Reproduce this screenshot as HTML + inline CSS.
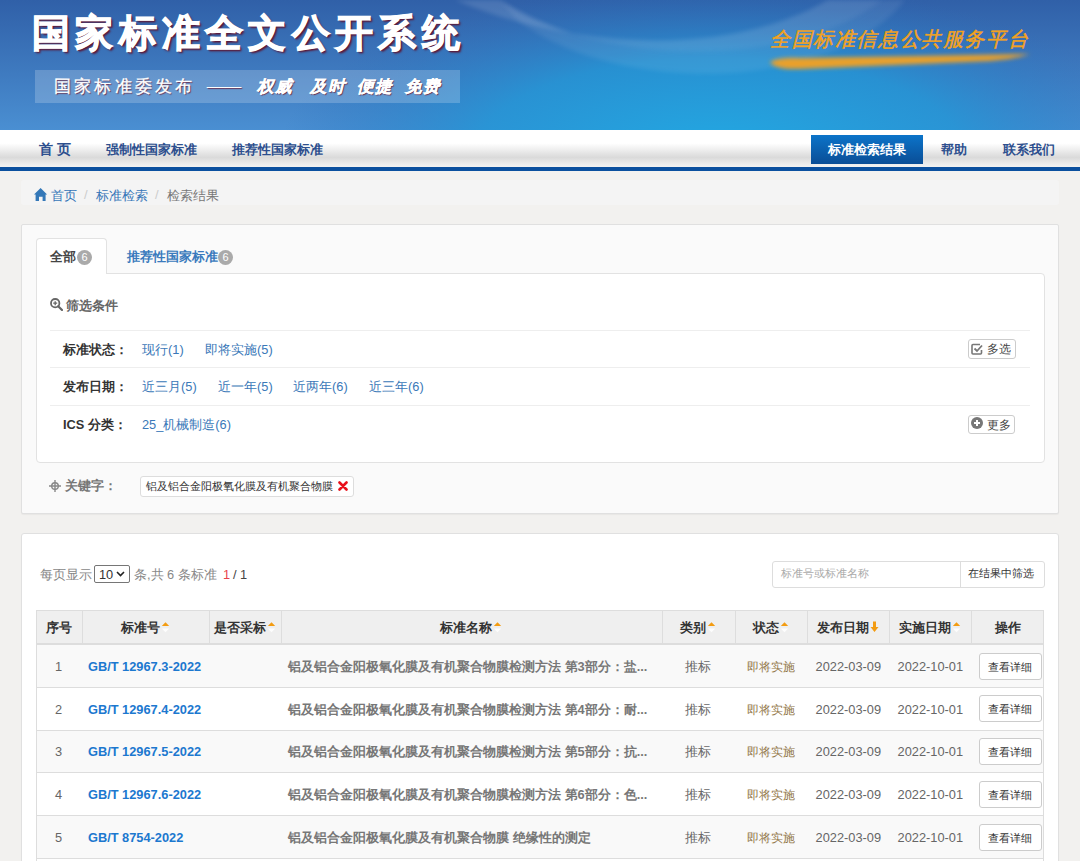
<!DOCTYPE html>
<html><head><meta charset="utf-8">
<style>
*{box-sizing:border-box;margin:0;padding:0}
html,body{width:1080px;height:861px;overflow:hidden}
body{font-family:"Liberation Sans",sans-serif;background:#f2f1ef;position:relative;font-size:13px;color:#555}
.abs{position:absolute}
#title{left:32px;top:11px;font-size:38px;line-height:44px;font-weight:bold;color:#fff;letter-spacing:5.3px;transform:none;transform-origin:0 0;-webkit-text-stroke:1.1px #fff;
 text-shadow:1px 1px 0 #5a1a3a,2px 2px 2px #5a1a3a}
#subbox{left:35px;top:70px;width:425px;height:33px;background:rgba(255,255,255,.2)}
.sub{top:76.5px;font-family:"Liberation Serif",serif;font-size:17px;line-height:20px;color:#fff;-webkit-text-stroke:0.3px #fff;text-shadow:1px 1px 1px #6a3050;white-space:nowrap}
.scr{font-weight:bold;font-style:italic;letter-spacing:1px;font-size:16.5px}
#slogan{left:770px;top:26px;font-size:20px;color:#f3a21e;font-style:italic;font-weight:normal;-webkit-text-stroke:0.5px #f3a21e;letter-spacing:1.6px;white-space:nowrap}
#nav{left:0;top:130px;width:1080px;height:37px;
 background:linear-gradient(180deg,#ffffff 0%,#ffffff 36%,#dadada 74%,#f0f0f0 97%)}
#navline{left:0;top:167px;width:1080px;height:3.5px;background:#0a4f9e}
.nv{position:absolute;top:141px;font-size:13px;font-weight:bold;color:#2d4f8e;white-space:nowrap}
#navact{left:810.5px;top:134.7px;width:112.5px;height:29px;background:linear-gradient(180deg,#0c74c9,#0a4d96)}
#crumb{left:21px;top:179.5px;width:1038px;height:25.5px;background:#f4f4f4;border-radius:3px}
.panel{position:absolute;left:21px;width:1038px;background:#fafafa;border:1px solid #e0e0e0;border-radius:2px;box-shadow:0 1px 1px rgba(0,0,0,.04)}
.tx{font-size:12.8px;white-space:nowrap;line-height:16px}
.badge{width:15px;height:15px;border-radius:7.5px;background:#aaa;color:#fff;font-size:11px;line-height:15px;text-align:center}
.hl{left:50px;width:980px;height:1px;background:#eee}
.lb{color:#333;font-weight:bold}
.lk{color:#3a78b8}
.sbtn{background:#fff;border:1px solid #ccc;border-radius:3px}
.th{font-size:12.8px;line-height:16px;font-weight:bold;color:#333;text-align:center;white-space:nowrap}
.td{font-size:12.8px;line-height:16px;white-space:nowrap}
</style></head>
<body>
<svg id="banner" class="abs" width="1080" height="130" viewBox="0 0 1080 130">
<defs>
<linearGradient id="bgv" x1="0" y1="0" x2="0" y2="1"><stop offset="0" stop-color="#3060a8"/><stop offset="1" stop-color="#4a8fd2"/></linearGradient>
<radialGradient id="cy" cx="720" cy="150" r="440" gradientUnits="userSpaceOnUse" gradientTransform="translate(720 150) scale(1 0.38) translate(-720 -150)"><stop offset="0" stop-color="#22a8e2" stop-opacity="1"/><stop offset="0.55" stop-color="#2296d6" stop-opacity="0.8"/><stop offset="1" stop-color="#2a70bd" stop-opacity="0"/></radialGradient>
<filter id="bl" x="-20%" y="-50%" width="140%" height="200%"><feGaussianBlur stdDeviation="2"/></filter>
<filter id="bl4"><feGaussianBlur stdDeviation="4"/></filter>
</defs>
<rect width="1080" height="130" fill="url(#bgv)"/>
<rect width="1080" height="130" fill="url(#cy)"/>
<path d="M455 0 C560 45 720 62 828 0 L882 0 C800 66 610 72 500 0 Z" fill="#fff" opacity="0.12" filter="url(#bl)"/>
<path d="M500 0 C610 72 800 66 882 0 L905 0 C830 95 610 95 515 18 Z" fill="#fff" opacity="0.07" filter="url(#bl)"/>
<path d="M770 62 Q780 57 800 58 L1030 54 Q1010 60 990 61 L800 69 Q775 70 770 62 Z" fill="#e9a02a" filter="url(#bl)"/>
</svg>
<div id="title" class="abs">国家标准全文公开系统</div>
<div id="subbox" class="abs"></div>
<div class="abs sub" style="left:54px;letter-spacing:3.2px">国家标准委发布</div>
<div class="abs sub" style="left:207px;top:75.5px">——</div>
<div class="abs sub scr" style="left:257px">权威</div>
<div class="abs sub scr" style="left:310px">及时</div>
<div class="abs sub scr" style="left:357px">便捷</div>
<div class="abs sub scr" style="left:405px">免费</div>
<div id="slogan" class="abs">全国标准信息公共服务平台</div>

<div id="nav" class="abs"></div>
<div id="navline" class="abs"></div>
<div class="nv" style="left:39px;top:141px;font-size:14px">首&nbsp;页</div>
<div class="nv" style="left:106px">强制性国家标准</div>
<div class="nv" style="left:232px">推荐性国家标准</div>
<div id="navact" class="abs"></div>
<div class="nv" style="left:828px;color:#fff">标准检索结果</div>
<div class="nv" style="left:941px">帮助</div>
<div class="nv" style="left:1003px">联系我们</div>

<div id="crumb" class="abs"></div>
<div id="crumbtxt" class="abs" style="left:34px;top:187px;font-size:13px;white-space:nowrap">
<svg width="14" height="14" viewBox="0 0 14 14" style="position:absolute;left:0.4px;top:1.2px"><path d="M6.6 0 L13.1 6.5 L11.6 6.5 L11.6 13 L8.6 13 L8.6 8.8 L5 8.8 L5 13 L1.6 13 L1.6 6.5 L0 6.5 Z" fill="#3478b8"/></svg>
<span style="position:absolute;left:17px;top:0;color:#3676b8">首页</span>
<span style="position:absolute;left:50px;top:0;color:#ccc">/</span>
<span style="position:absolute;left:62px;top:0;color:#3676b8">标准检索</span>
<span style="position:absolute;left:121px;top:0;color:#ccc">/</span>
<span style="position:absolute;left:133px;top:0;color:#777">检索结果</span>
</div>


<div class="panel" style="top:223.5px;height:290px"></div>
<!-- tabs -->
<div class="abs" style="left:36px;top:273px;width:1008.5px;height:190px;background:#fff;border:1px solid #e2e2e2;border-radius:0 4px 4px 4px"></div>
<div class="abs" style="left:36px;top:238px;width:71px;height:36px;background:#fff;border:1px solid #e2e2e2;border-bottom:none;border-radius:4px 4px 0 0"></div>
<div class="abs tx" style="left:50px;top:249px;color:#444;font-weight:bold">全部</div>
<div class="abs badge" style="left:77px;top:250px">6</div>
<div class="abs tx" style="left:127px;top:249px;color:#3a7abd;font-weight:bold">推荐性国家标准</div>
<div class="abs badge" style="left:218px;top:250px">6</div>
<svg class="abs" style="left:50px;top:298px" width="13" height="13" viewBox="0 0 13 13"><circle cx="5.2" cy="5.2" r="4.2" fill="none" stroke="#666" stroke-width="1.8"/><path d="M8.2 8.2 L12 12" stroke="#666" stroke-width="2.2" stroke-linecap="round"/><path d="M3.2 5.2 H7.2 M5.2 3.2 V7.2" stroke="#666" stroke-width="1.3"/></svg>
<div class="abs tx" style="left:66px;top:298px;color:#666;font-weight:bold">筛选条件</div>
<div class="abs hl" style="top:330px"></div>
<div class="abs hl" style="top:367px"></div>
<div class="abs hl" style="top:405px"></div>
<div class="abs tx lb" style="left:63px;top:342px">标准状态：</div>
<div class="abs tx lk" style="left:142px;top:342px">现行(1)</div>
<div class="abs tx lk" style="left:205px;top:342px">即将实施(5)</div>
<div class="abs tx lb" style="left:63px;top:379px">发布日期：</div>
<div class="abs tx lk" style="left:142px;top:379px">近三月(5)</div>
<div class="abs tx lk" style="left:218px;top:379px">近一年(5)</div>
<div class="abs tx lk" style="left:293px;top:379px">近两年(6)</div>
<div class="abs tx lk" style="left:369px;top:379px">近三年(6)</div>
<div class="abs tx lb" style="left:63px;top:417px">ICS 分类：</div>
<div class="abs tx lk" style="left:142px;top:417px">25_机械制造(6)</div>
<div class="abs sbtn" style="left:967.5px;top:339px;width:48px;height:20px"></div>
<svg class="abs" style="left:971px;top:343px" width="12" height="12" viewBox="0 0 12 12"><path d="M9 1.5 H2 Q1 1.5 1 2.5 V10 Q1 11 2 11 H9.5 Q10.5 11 10.5 10 V7" fill="none" stroke="#777" stroke-width="1.6"/><path d="M3.5 5.5 L6 8 L11 2.5" fill="none" stroke="#777" stroke-width="1.8"/></svg>
<div class="abs tx" style="left:987px;top:341px;color:#444;font-size:12.2px">多选</div>
<div class="abs sbtn" style="left:967.5px;top:414.5px;width:47.5px;height:19.5px"></div>
<svg class="abs" style="left:970.5px;top:417px" width="12" height="12" viewBox="0 0 12 12"><circle cx="6" cy="6" r="6" fill="#777"/><path d="M6 3 V9 M3 6 H9" stroke="#fff" stroke-width="2"/></svg>
<div class="abs tx" style="left:987px;top:416.5px;color:#444;font-size:12.2px">更多</div>
<svg class="abs" style="left:49px;top:479.5px" width="12" height="12" viewBox="0 0 12 12"><circle cx="6" cy="6" r="3.3" fill="none" stroke="#888" stroke-width="1.4"/><path d="M6 0 V12 M0 6 H12" stroke="#888" stroke-width="1.4"/></svg>
<div class="abs tx" style="left:65px;top:478px;color:#777;font-weight:bold">关键字：</div>
<div class="abs" style="left:140px;top:476px;width:214px;height:21px;background:#fff;border:1px solid #ddd;border-radius:3px"></div>
<div class="abs" style="left:146px;top:479px;font-size:10.9px;line-height:14px;color:#333;white-space:nowrap">铝及铝合金阳极氧化膜及有机聚合物膜</div>
<svg class="abs" style="left:338px;top:481px" width="10" height="10" viewBox="0 0 10 10"><path d="M1.5 1.5 L8.5 8.5 M8.5 1.5 L1.5 8.5" stroke="#e8101a" stroke-width="2.6" stroke-linecap="round"/></svg>

<div class="panel" style="top:532.5px;height:340px;background:#fff;border-radius:3px"></div>
<div class="abs" style="left:40px;top:567px;font-size:12.8px;line-height:16px;color:#888;white-space:nowrap">每页显示</div>
<div class="abs" style="left:94px;top:565px;width:36px;height:18px;border:1px solid #767676;border-radius:2px;background:#fff"></div>
<div class="abs" style="left:99px;top:567px;font-size:12.8px;line-height:16px;color:#333">10</div>
<svg class="abs" style="left:116px;top:571px" width="9" height="6" viewBox="0 0 9 6"><path d="M1 1 L4.5 4.5 L8 1" fill="none" stroke="#222" stroke-width="1.6"/></svg>
<div class="abs" style="left:134px;top:567px;font-size:12.8px;line-height:16px;color:#888;white-space:nowrap">条,共 6 条标准</div>
<div class="abs" style="left:223px;top:567px;font-size:12.8px;line-height:16px;color:#e8424a">1</div>
<div class="abs" style="left:233px;top:567px;font-size:12.8px;line-height:16px;color:#444;white-space:nowrap">/ 1</div>
<div class="abs" style="left:771.5px;top:560.5px;width:273px;height:27px;border:1px solid #ddd;border-radius:3px;background:#fff"></div>
<div class="abs" style="left:959.5px;top:560.5px;width:1px;height:27px;background:#ddd"></div>
<div class="abs" style="left:780.5px;top:566px;font-size:10.9px;line-height:14px;color:#aaa;white-space:nowrap">标准号或标准名称</div>
<div class="abs" style="left:968px;top:566px;font-size:10.9px;line-height:14px;color:#333;white-space:nowrap">在结果中筛选</div>

<div class="abs" style="left:35.8px;top:610.2px;width:1008.2px;height:34.5px;background:#efefef;border:1px solid #ddd;border-bottom:2px solid #ddd"></div>
<div class="abs" style="left:35.8px;top:644.70px;width:1008.2px;height:42.72px;background:#f9f9f9;border-left:1px solid #ddd;border-right:1px solid #ddd"></div><div class="abs" style="left:35.8px;top:686.92px;width:1008.2px;height:1px;background:#ddd;z-index:1"></div>
<div class="abs" style="left:35.8px;top:687.42px;width:1008.2px;height:42.72px;background:#fff;border-left:1px solid #ddd;border-right:1px solid #ddd"></div><div class="abs" style="left:35.8px;top:729.64px;width:1008.2px;height:1px;background:#ddd;z-index:1"></div>
<div class="abs" style="left:35.8px;top:730.14px;width:1008.2px;height:42.72px;background:#f9f9f9;border-left:1px solid #ddd;border-right:1px solid #ddd"></div><div class="abs" style="left:35.8px;top:772.36px;width:1008.2px;height:1px;background:#ddd;z-index:1"></div>
<div class="abs" style="left:35.8px;top:772.86px;width:1008.2px;height:42.72px;background:#fff;border-left:1px solid #ddd;border-right:1px solid #ddd"></div><div class="abs" style="left:35.8px;top:815.08px;width:1008.2px;height:1px;background:#ddd;z-index:1"></div>
<div class="abs" style="left:35.8px;top:815.58px;width:1008.2px;height:42.72px;background:#f9f9f9;border-left:1px solid #ddd;border-right:1px solid #ddd"></div><div class="abs" style="left:35.8px;top:857.80px;width:1008.2px;height:1px;background:#ddd;z-index:1"></div>
<div class="abs" style="left:81.5px;top:611.2px;width:1px;height:31.5px;background:#ddd"></div>
<div class="abs" style="left:208.5px;top:611.2px;width:1px;height:31.5px;background:#ddd"></div>
<div class="abs" style="left:281px;top:611.2px;width:1px;height:31.5px;background:#ddd"></div>
<div class="abs" style="left:661.5px;top:611.2px;width:1px;height:31.5px;background:#ddd"></div>
<div class="abs" style="left:734.8px;top:611.2px;width:1px;height:31.5px;background:#ddd"></div>
<div class="abs" style="left:807.3px;top:611.2px;width:1px;height:31.5px;background:#ddd"></div>
<div class="abs" style="left:889.3px;top:611.2px;width:1px;height:31.5px;background:#ddd"></div>
<div class="abs" style="left:971.3px;top:611.2px;width:1px;height:31.5px;background:#ddd"></div>
<div class="abs th" style="left:35.8px;top:619.7px;width:45.7px">序号</div>
<div class="abs th" style="left:81.5px;top:619.7px;width:127.0px">标准号<svg width="9" height="12" viewBox="0 0 9 12" style="vertical-align:-1px;margin-left:1px"><path d="M0.8 5 L4.5 1.2 L8.2 5 Z" fill="#f39c12"/><path d="M0.8 7.5 L4.5 11.2 L8.2 7.5 Z" fill="#fdfdfd"/></svg></div>
<div class="abs th" style="left:208.5px;top:619.7px;width:72.5px">是否采标<svg width="9" height="12" viewBox="0 0 9 12" style="vertical-align:-1px;margin-left:1px"><path d="M0.8 5 L4.5 1.2 L8.2 5 Z" fill="#f39c12"/><path d="M0.8 7.5 L4.5 11.2 L8.2 7.5 Z" fill="#fdfdfd"/></svg></div>
<div class="abs th" style="left:281px;top:619.7px;width:380.5px">标准名称<svg width="9" height="12" viewBox="0 0 9 12" style="vertical-align:-1px;margin-left:1px"><path d="M0.8 5 L4.5 1.2 L8.2 5 Z" fill="#f39c12"/><path d="M0.8 7.5 L4.5 11.2 L8.2 7.5 Z" fill="#fdfdfd"/></svg></div>
<div class="abs th" style="left:661.5px;top:619.7px;width:73.29999999999995px">类别<svg width="9" height="12" viewBox="0 0 9 12" style="vertical-align:-1px;margin-left:1px"><path d="M0.8 5 L4.5 1.2 L8.2 5 Z" fill="#f39c12"/><path d="M0.8 7.5 L4.5 11.2 L8.2 7.5 Z" fill="#fdfdfd"/></svg></div>
<div class="abs th" style="left:734.8px;top:619.7px;width:72.5px">状态<svg width="9" height="12" viewBox="0 0 9 12" style="vertical-align:-1px;margin-left:1px"><path d="M0.8 5 L4.5 1.2 L8.2 5 Z" fill="#f39c12"/><path d="M0.8 7.5 L4.5 11.2 L8.2 7.5 Z" fill="#fdfdfd"/></svg></div>
<div class="abs th" style="left:807.3px;top:619.7px;width:82.0px">发布日期<svg width="9" height="12" viewBox="0 0 9 12" style="vertical-align:-1px;margin-left:1px"><path d="M3 0.5 H6 V6 H8.5 L4.5 11 L0.5 6 H3 Z" fill="#f39c12"/></svg></div>
<div class="abs th" style="left:889.3px;top:619.7px;width:82.0px">实施日期<svg width="9" height="12" viewBox="0 0 9 12" style="vertical-align:-1px;margin-left:1px"><path d="M0.8 5 L4.5 1.2 L8.2 5 Z" fill="#f39c12"/><path d="M0.8 7.5 L4.5 11.2 L8.2 7.5 Z" fill="#fdfdfd"/></svg></div>
<div class="abs th" style="left:971.3px;top:619.7px;width:72.70000000000005px">操作</div>
<div class="abs td" style="left:35.8px;top:659.00px;width:45.7px;text-align:center;color:#666">1</div>
<div class="abs td" style="left:88px;top:659.00px;color:#1c78cf;font-weight:bold">GB/T 12967.3-2022</div>
<div class="abs td" style="left:288px;top:659.00px;color:#777;font-weight:bold">铝及铝合金阳极氧化膜及有机聚合物膜检测方法 第3部分：盐...</div>
<div class="abs td" style="left:661.5px;top:659.00px;width:73.29999999999995px;text-align:center;color:#666">推标</div>
<div class="abs td" style="left:734.8px;top:659.00px;width:72.5px;text-align:center;color:#937849;font-size:12.2px">即将实施</div>
<div class="abs td" style="left:807.3px;top:659.00px;width:82.0px;text-align:center;color:#666">2022-03-09</div>
<div class="abs td" style="left:889.3px;top:659.00px;width:82.0px;text-align:center;color:#666">2022-10-01</div>
<div class="abs" style="left:978.5px;top:652.70px;width:63px;height:27px;border:1px solid #ccc;border-radius:3px;background:#fff"></div>
<div class="abs td" style="left:978.5px;top:658.70px;width:63px;text-align:center;color:#333;font-size:11px">查看详细</div>
<div class="abs td" style="left:35.8px;top:701.72px;width:45.7px;text-align:center;color:#666">2</div>
<div class="abs td" style="left:88px;top:701.72px;color:#1c78cf;font-weight:bold">GB/T 12967.4-2022</div>
<div class="abs td" style="left:288px;top:701.72px;color:#777;font-weight:bold">铝及铝合金阳极氧化膜及有机聚合物膜检测方法 第4部分：耐...</div>
<div class="abs td" style="left:661.5px;top:701.72px;width:73.29999999999995px;text-align:center;color:#666">推标</div>
<div class="abs td" style="left:734.8px;top:701.72px;width:72.5px;text-align:center;color:#937849;font-size:12.2px">即将实施</div>
<div class="abs td" style="left:807.3px;top:701.72px;width:82.0px;text-align:center;color:#666">2022-03-09</div>
<div class="abs td" style="left:889.3px;top:701.72px;width:82.0px;text-align:center;color:#666">2022-10-01</div>
<div class="abs" style="left:978.5px;top:695.42px;width:63px;height:27px;border:1px solid #ccc;border-radius:3px;background:#fff"></div>
<div class="abs td" style="left:978.5px;top:701.42px;width:63px;text-align:center;color:#333;font-size:11px">查看详细</div>
<div class="abs td" style="left:35.8px;top:744.44px;width:45.7px;text-align:center;color:#666">3</div>
<div class="abs td" style="left:88px;top:744.44px;color:#1c78cf;font-weight:bold">GB/T 12967.5-2022</div>
<div class="abs td" style="left:288px;top:744.44px;color:#777;font-weight:bold">铝及铝合金阳极氧化膜及有机聚合物膜检测方法 第5部分：抗...</div>
<div class="abs td" style="left:661.5px;top:744.44px;width:73.29999999999995px;text-align:center;color:#666">推标</div>
<div class="abs td" style="left:734.8px;top:744.44px;width:72.5px;text-align:center;color:#937849;font-size:12.2px">即将实施</div>
<div class="abs td" style="left:807.3px;top:744.44px;width:82.0px;text-align:center;color:#666">2022-03-09</div>
<div class="abs td" style="left:889.3px;top:744.44px;width:82.0px;text-align:center;color:#666">2022-10-01</div>
<div class="abs" style="left:978.5px;top:738.14px;width:63px;height:27px;border:1px solid #ccc;border-radius:3px;background:#fff"></div>
<div class="abs td" style="left:978.5px;top:744.14px;width:63px;text-align:center;color:#333;font-size:11px">查看详细</div>
<div class="abs td" style="left:35.8px;top:787.16px;width:45.7px;text-align:center;color:#666">4</div>
<div class="abs td" style="left:88px;top:787.16px;color:#1c78cf;font-weight:bold">GB/T 12967.6-2022</div>
<div class="abs td" style="left:288px;top:787.16px;color:#777;font-weight:bold">铝及铝合金阳极氧化膜及有机聚合物膜检测方法 第6部分：色...</div>
<div class="abs td" style="left:661.5px;top:787.16px;width:73.29999999999995px;text-align:center;color:#666">推标</div>
<div class="abs td" style="left:734.8px;top:787.16px;width:72.5px;text-align:center;color:#937849;font-size:12.2px">即将实施</div>
<div class="abs td" style="left:807.3px;top:787.16px;width:82.0px;text-align:center;color:#666">2022-03-09</div>
<div class="abs td" style="left:889.3px;top:787.16px;width:82.0px;text-align:center;color:#666">2022-10-01</div>
<div class="abs" style="left:978.5px;top:780.86px;width:63px;height:27px;border:1px solid #ccc;border-radius:3px;background:#fff"></div>
<div class="abs td" style="left:978.5px;top:786.86px;width:63px;text-align:center;color:#333;font-size:11px">查看详细</div>
<div class="abs td" style="left:35.8px;top:829.88px;width:45.7px;text-align:center;color:#666">5</div>
<div class="abs td" style="left:88px;top:829.88px;color:#1c78cf;font-weight:bold">GB/T 8754-2022</div>
<div class="abs td" style="left:288px;top:829.88px;color:#777;font-weight:bold">铝及铝合金阳极氧化膜及有机聚合物膜 绝缘性的测定</div>
<div class="abs td" style="left:661.5px;top:829.88px;width:73.29999999999995px;text-align:center;color:#666">推标</div>
<div class="abs td" style="left:734.8px;top:829.88px;width:72.5px;text-align:center;color:#937849;font-size:12.2px">即将实施</div>
<div class="abs td" style="left:807.3px;top:829.88px;width:82.0px;text-align:center;color:#666">2022-03-09</div>
<div class="abs td" style="left:889.3px;top:829.88px;width:82.0px;text-align:center;color:#666">2022-10-01</div>
<div class="abs" style="left:978.5px;top:823.58px;width:63px;height:27px;border:1px solid #ccc;border-radius:3px;background:#fff"></div>
<div class="abs td" style="left:978.5px;top:829.58px;width:63px;text-align:center;color:#333;font-size:11px">查看详细</div>
<div class="abs" style="left:35.8px;top:858.80px;width:1008.2px;height:20px;background:#fff;border-left:1px solid #ddd;border-right:1px solid #ddd"></div>
</body></html>
